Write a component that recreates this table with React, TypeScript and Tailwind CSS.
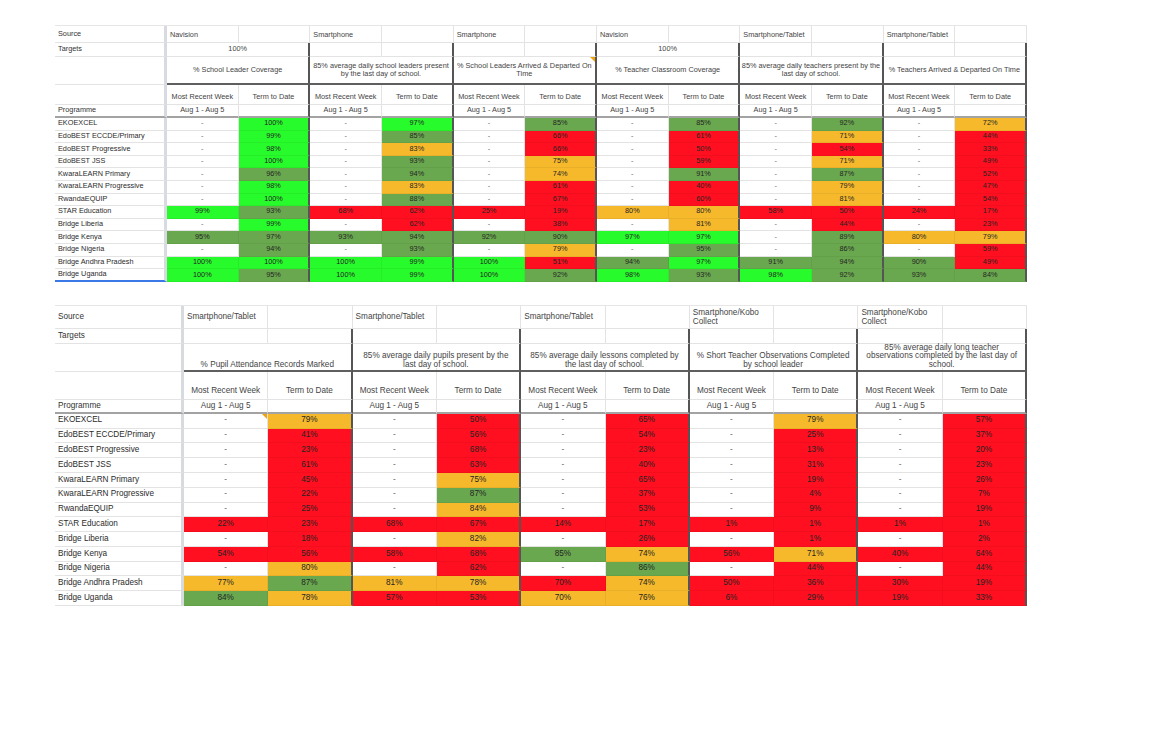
import React from 'react';

type Tone = 'b' | 'g' | 'o' | 'r' | 'w';

interface TableSpec {
  grid: string;
  text: string;
  headLeading: string;
  headAlign: string;
  h: { source: string; targets: string; header: string; mrw: string; prog: string; data: string };
  sources: string[];
  targets: string[];
  headers: string[][];
  rows: [string, string][];
  headerMarker?: number;
  dataMarker?: { row: number; col: number };
  selectLast?: boolean;
}

// b = bright green, g = dark green, o = amber, r = red, "-" = no data
const toneBg: Record<Tone, string> = {
  b: 'bg-[#28fb2c]',
  g: 'bg-[#6aa84f]',
  o: 'bg-[#f6b92c]',
  r: 'bg-[#ff0f1f]',
  w: 'bg-white',
};

function parseCell(raw: string): { text: string; tone: Tone } {
  if (raw === '-') return { text: '-', tone: 'w' };
  return { text: raw.slice(0, -1) + '%', tone: raw.slice(-1) as Tone };
}

const T1: TableSpec = {
  grid: 'grid-cols-[112px_repeat(12,minmax(0,1fr))]',
  text: 'text-[7.3px]',
  headLeading: 'leading-[8px]',
  headAlign: 'items-center',
  h: { source: 'h-[18px]', targets: 'h-[14px]', header: 'h-[28px]', mrw: 'h-[20px]', prog: 'h-[13px]', data: 'h-[12.6px]' },
  sources: ['Navision', 'Smartphone', 'Smartphone', 'Navision', 'Smartphone/Tablet', 'Smartphone/Tablet'],
  targets: ['100%', '', '', '100%', '', ''],
  headers: [
    ['% School Leader Coverage'],
    ['85% average daily school leaders present', 'by the last day of school.'],
    ['% School Leaders Arrived & Departed On', 'Time'],
    ['% Teacher Classroom Coverage'],
    ['85% average daily teachers present by the', 'last day of school.'],
    ['% Teachers Arrived & Departed On Time'],
  ],
  rows: [
    ['EKOEXCEL', '- 100b - 97b - 85g - 85g - 92g - 72o'],
    ['EdoBEST ECCDE/Primary', '- 99b - 85g - 66r - 61r - 71o - 44r'],
    ['EdoBEST Progressive', '- 98b - 83o - 66r - 50r - 54r - 33r'],
    ['EdoBEST JSS', '- 100b - 93g - 75o - 59r - 71o - 49r'],
    ['KwaraLEARN Primary', '- 96g - 94g - 74o - 91g - 87g - 52r'],
    ['KwaraLEARN Progressive', '- 98b - 83o - 61r - 40r - 79o - 47r'],
    ['RwandaEQUIP', '- 100b - 88g - 67r - 60r - 81o - 54r'],
    ['STAR Education', '99b 93g 68r 62r 25r 19r 80o 80o 58r 50r 24r 17r'],
    ['Bridge Liberia', '- 99b - 62r - 38r - 81o - 44r - 23r'],
    ['Bridge Kenya', '95g 97g 93g 94g 92g 90g 97b 97b - 89g 80o 79o'],
    ['Bridge Nigeria', '- 94g - 93g - 79o - 95g - 86g - 59r'],
    ['Bridge Andhra Pradesh', '100b 100b 100b 99b 100b 51r 94g 97b 91g 94g 90g 49r'],
    ['Bridge Uganda', '100b 95g 100b 99b 100b 92g 98b 93g 98b 92g 93g 84g'],
  ],
  headerMarker: 2,
  selectLast: true,
};

const T2: TableSpec = {
  grid: 'grid-cols-[129px_repeat(10,minmax(0,1fr))]',
  text: 'text-[8.2px]',
  headLeading: 'leading-[8.4px]',
  headAlign: 'items-end pb-[1px]',
  h: { source: 'h-[24px]', targets: 'h-[15px]', header: 'h-[24px]', mrw: 'h-[32px]', prog: 'h-[14px]', data: 'h-[14.8px]' },
  sources: ['Smartphone/Tablet', 'Smartphone/Tablet', 'Smartphone/Tablet', 'Smartphone/Kobo Collect', 'Smartphone/Kobo Collect'],
  targets: ['', '', '', '', ''],
  headers: [
    ['% Pupil Attendance Records Marked'],
    ['85% average daily pupils present by the', 'last day of school.'],
    ['85% average daily lessons completed by', 'the last day of school.'],
    ['% Short Teacher Observations Completed', 'by school leader'],
    ['85% average daily long teacher', 'observations completed by the last day of', 'school.'],
  ],
  rows: [
    ['EKOEXCEL', '- 79o - 50r - 65r - 79o - 57r'],
    ['EdoBEST ECCDE/Primary', '- 41r - 56r - 54r - 25r - 37r'],
    ['EdoBEST Progressive', '- 23r - 68r - 23r - 13r - 20r'],
    ['EdoBEST JSS', '- 61r - 63r - 40r - 31r - 23r'],
    ['KwaraLEARN Primary', '- 45r - 75o - 65r - 19r - 26r'],
    ['KwaraLEARN Progressive', '- 22r - 87g - 37r - 4r - 7r'],
    ['RwandaEQUIP', '- 25r - 84o - 53r - 9r - 19r'],
    ['STAR Education', '22r 23r 68r 67r 14r 17r 1r 1r 1r 1r'],
    ['Bridge Liberia', '- 18r - 82o - 26r - 1r - 2r'],
    ['Bridge Kenya', '54r 56r 58r 68r 85g 74o 56r 71o 40r 64r'],
    ['Bridge Nigeria', '- 80o - 62r - 86g - 44r - 44r'],
    ['Bridge Andhra Pradesh', '77o 87g 81o 78o 70r 74o 50r 36r 30r 19r'],
    ['Bridge Uganda', '84g 78o 57r 53r 70o 76o 6r 29r 19r 33r'],
  ],
  dataMarker: { row: 0, col: 0 },
};

function Marker() {
  return <span className="absolute right-0 top-0 h-0 w-0 border-t-[5px] border-l-[5px] border-t-[#f0a30a] border-l-transparent" />;
}

function SheetTable({ spec }: { spec: TableSpec }) {
  const last = spec.rows.length - 1;
  return (
    <div className={`w-[972px] ${spec.text} text-[#333]`}>
      {/* Source */}
      <div className={`grid ${spec.grid} ${spec.h.source} border-t border-t-[#e6e6e6]`}>
        <div className="flex items-center pl-[3px] border-r-[3px] border-r-[#d7dadf] border-b border-b-[#e3e3e3]">Source</div>
        {spec.sources.map((s, g) => (
          <React.Fragment key={g}>
            <div className="flex items-center px-[3px] leading-[9px] text-[#444] border-r border-b border-[#e3e3e3]">{s}</div>
            <div className="border-r border-b border-[#e3e3e3]" />
          </React.Fragment>
        ))}
      </div>

      {/* Targets */}
      <div className={`grid ${spec.grid} ${spec.h.targets}`}>
        <div className="flex items-center pl-[3px] border-r-[3px] border-r-[#d7dadf] border-b border-b-[#e3e3e3]">Targets</div>
        {spec.targets.map((t, g) =>
          t ? (
            <div key={g} className="col-span-2 flex items-center justify-center text-[#444] border-r-2 border-r-[#555] border-b border-b-[#e3e3e3]">
              {t}
            </div>
          ) : (
            <React.Fragment key={g}>
              <div className="border-r border-r-[#e3e3e3] border-b border-b-[#e3e3e3]" />
              <div className="border-r-2 border-r-[#555] border-b border-b-[#e3e3e3]" />
            </React.Fragment>
          ),
        )}
      </div>

      {/* Indicator headers */}
      <div className={`grid ${spec.grid} ${spec.h.header}`}>
        <div className="border-r-[3px] border-r-[#d7dadf] border-b border-b-[#e3e3e3]" />
        {spec.headers.map((lines, g) => (
          <div
            key={g}
            className={`relative col-span-2 flex justify-center ${spec.headAlign} text-center text-[#444] ${spec.headLeading} border-r-2 border-r-[#555] border-b-2 border-b-[#5f5f5f]`}
          >
            <div className="whitespace-nowrap">
              {lines.map((l, i) => (
                <div key={i}>{l}</div>
              ))}
            </div>
            {spec.headerMarker === g && <Marker />}
          </div>
        ))}
      </div>

      {/* Period headers */}
      <div className={`grid ${spec.grid} ${spec.h.mrw}`}>
        <div className="border-r-[3px] border-r-[#d7dadf] border-b border-b-[#e3e3e3]" />
        {spec.headers.map((_, g) => (
          <React.Fragment key={g}>
            <div className="flex items-end justify-center pb-[1px] whitespace-nowrap text-[#444] border-r border-r-[#e3e3e3] border-b border-b-[#e3e3e3]">
              Most Recent Week
            </div>
            <div className="flex items-end justify-center pb-[1px] whitespace-nowrap text-[#444] border-r-2 border-r-[#555] border-b border-b-[#e3e3e3]">
              Term to Date
            </div>
          </React.Fragment>
        ))}
      </div>

      {/* Programme */}
      <div className={`grid ${spec.grid} ${spec.h.prog}`}>
        <div className="flex items-center pl-[3px] border-r-[3px] border-r-[#d7dadf] border-b-2 border-b-[#a3a3a3]">Programme</div>
        {spec.headers.map((_, g) => (
          <React.Fragment key={g}>
            <div className="flex items-center justify-center whitespace-nowrap text-[#444] border-r border-r-[#e3e3e3] border-b-2 border-b-[#a3a3a3]">
              Aug 1 - Aug 5
            </div>
            <div className="border-r-2 border-r-[#555] border-b-2 border-b-[#a3a3a3]" />
          </React.Fragment>
        ))}
      </div>

      {/* Data */}
      {spec.rows.map(([label, raw], r) => (
        <div key={label} className={`grid ${spec.grid} ${spec.h.data}`}>
          <div
            className={`flex items-center pl-[3px] whitespace-nowrap text-[#2b2b2b] border-r-[3px] border-r-[#d7dadf] ${
              spec.selectLast && r === last ? 'border-b-2 border-b-[#3b78e7]' : 'border-b border-b-[#e3e3e3]'
            }`}
          >
            {label}
          </div>
          {raw.split(' ').map((v, c) => {
            const cell = parseCell(v);
            const coloured = cell.tone !== 'w';
            const groupEnd = c % 2 === 1;
            const right = groupEnd
              ? 'border-r-2 border-r-[#555]'
              : coloured
                ? 'border-r border-r-black/5'
                : 'border-r border-r-[#e3e3e3]';
            const bottom = coloured ? 'border-b border-b-black/5' : 'border-b border-b-[#e3e3e3]';
            const marked = spec.dataMarker && spec.dataMarker.row === r && spec.dataMarker.col === c;
            return (
              <div
                key={c}
                className={`relative flex items-center justify-center ${toneBg[cell.tone]} ${right} ${bottom} ${
                  coloured ? 'text-[#242424]' : 'text-[#666]'
                }`}
              >
                {cell.text}
                {marked && <Marker />}
              </div>
            );
          })}
        </div>
      ))}
    </div>
  );
}

export default function App() {
  return (
    <div className="min-h-[734px] w-[1162px] bg-white pl-[55px] pt-[25px] font-['Liberation_Sans',Arial,sans-serif]">
      <SheetTable spec={T1} />
      <div className="mt-[23px]">
        <SheetTable spec={T2} />
      </div>
    </div>
  );
}
